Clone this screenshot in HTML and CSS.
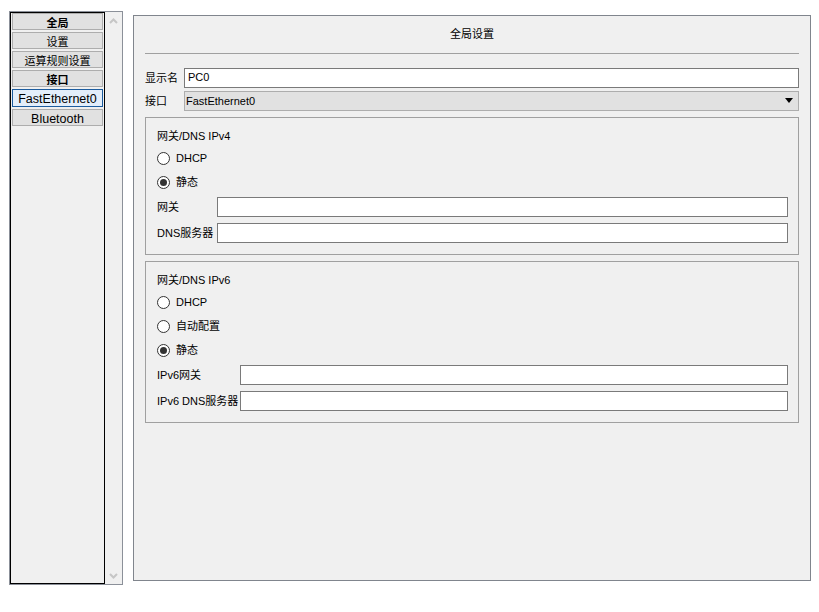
FILE: index.html
```html
<!DOCTYPE html>
<html lang="zh">
<head>
<meta charset="utf-8">
<title>全局设置</title>
<link rel="stylesheet" href="styles.css">
</head>
<body>
<div class="app">
  <div class="side">
    <div class="list">
      <div class="item cjk bold">全局</div>
      <div class="item cjk">设置</div>
      <div class="item cjk">运算规则设置</div>
      <div class="item cjk bold">接口</div>
      <div class="item selected">FastEthernet0</div>
      <div class="item">Bluetooth</div>
    </div>
    <div class="scroll">
      <svg class="chev" width="9" height="6" viewBox="0 0 9 6"><polyline points="1,5 4.5,1.5 8,5" fill="none" stroke="#c6c6c6" stroke-width="2"/></svg>
      <svg class="chev" width="9" height="6" viewBox="0 0 9 6"><polyline points="1,1 4.5,4.5 8,1" fill="none" stroke="#c6c6c6" stroke-width="2"/></svg>
    </div>
  </div>

  <div class="main">
    <div class="header">全局设置</div>
    <div class="sep"></div>

    <div class="row first">
      <div class="label w39">显示名</div>
      <div class="field">PC0</div>
    </div>
    <div class="row second">
      <div class="label w39">接口</div>
      <div class="select">
        <span>FastEthernet0</span>
        <svg width="8" height="5" viewBox="0 0 8 5"><polygon points="0,0 8,0 4,5" fill="#000"/></svg>
      </div>
    </div>

    <div class="group">
      <div class="gtitle">网关/DNS IPv4</div>
      <div class="radio-row first-radio"><span class="radio"></span><span>DHCP</span></div>
      <div class="radio-row"><span class="radio checked"></span><span class="rtext">静态</span></div>
      <div class="row grow-first">
        <div class="label w60">网关</div>
        <div class="field"></div>
      </div>
      <div class="row grow-next">
        <div class="label w60">DNS服务器</div>
        <div class="field"></div>
      </div>
    </div>

    <div class="group">
      <div class="gtitle">网关/DNS IPv6</div>
      <div class="radio-row first-radio"><span class="radio"></span><span>DHCP</span></div>
      <div class="radio-row"><span class="radio"></span><span class="rtext">自动配置</span></div>
      <div class="radio-row"><span class="radio checked"></span><span class="rtext">静态</span></div>
      <div class="row grow-first">
        <div class="label w83">IPv6网关</div>
        <div class="field"></div>
      </div>
      <div class="row grow-next">
        <div class="label w83">IPv6 DNS服务器</div>
        <div class="field"></div>
      </div>
    </div>
  </div>
</div>
</body>
</html>
```

FILE: styles.css
```css
* { box-sizing: border-box; }

body {
  margin: 0;
  background: #ffffff;
  font-family: "Liberation Sans", "Noto Sans CJK SC", sans-serif;
  font-size: 11px;
  color: #000;
}

.app {
  display: flex;
  align-items: flex-start;
  padding: 11px 0 0 9px;
}

/* left navigation */
.side {
  width: 114px;
  height: 574px;
  border: 1px solid #8b9099;
  background: #f0f0f0;
  display: flex;
}

.list {
  width: 95px;
  height: 572px;
  border: 1px solid #000;
  padding: 0 1px;
  display: flex;
  flex-direction: column;
  gap: 2px;
}

.item {
  height: 17px;
  border: 1px solid #adadad;
  background: #e1e1e1;
  text-align: center;
  font-size: 12.5px;
  line-height: 12px;
  padding-top: 3px;
  white-space: nowrap;
  overflow: visible;
}

.item.cjk { font-size: 11px; }
.item.bold { font-weight: bold; }

.item.selected {
  height: 18px;
  border-color: #1c5c9e;
  background: #e3eefa;
}

.scroll {
  width: 17px;
  display: flex;
  flex-direction: column;
  align-items: center;
  justify-content: space-between;
  padding: 6px 0 5px 0;
}

.chev { display: block; }

/* main panel */
.main {
  margin: 4px 0 0 10px;
  width: 678px;
  height: 566px;
  border: 1px solid #80858d;
  background: #f0f0f0;
  padding: 0 11px;
}

.header {
  height: 37px;
  display: flex;
  align-items: center;
  justify-content: center;
  font-size: 11px;
  padding-bottom: 4px;
}

.sep {
  height: 1px;
  background: #a0a0a0;
}

.row {
  display: flex;
  align-items: center;
  height: 20px;
}

.row.first { margin-top: 14px; }
.row.second { margin-top: 3px; }
.row.grow-first { margin-top: 3px; }
.row.grow-next { margin-top: 6px; }

.label {
  flex: none;
  white-space: nowrap;
  padding-bottom: 2px;
}
.w39 { width: 39px; }
.w60 { width: 60px; }
.w83 { width: 83px; }

.field {
  flex: 1;
  height: 20px;
  border: 1px solid #7a7a7a;
  background: #ffffff;
  padding-left: 3px;
  line-height: 17px;
}

.select {
  flex: 1;
  height: 20px;
  border: 1px solid #adadad;
  background: #e1e1e1;
  display: flex;
  align-items: center;
  justify-content: space-between;
  padding: 0 5px 1px 1px;
}

.select svg { display: block; }

/* group boxes */
.group {
  margin-top: 6px;
  border: 1px solid #a0a0a0;
  padding: 11px 10px 11px 11px;
}

.gtitle {
  height: 14px;
  line-height: 14px;
}

.radio-row {
  height: 24px;
  display: flex;
  align-items: center;
  gap: 6px;
}

.radio-row.first-radio { margin-top: 3px; }

.rtext { padding-bottom: 2px; }

.radio {
  width: 13px;
  height: 13px;
  border: 1px solid #333;
  border-radius: 50%;
  background: #fff;
  display: flex;
  align-items: center;
  justify-content: center;
}

.radio.checked::after {
  content: "";
  width: 7px;
  height: 7px;
  border-radius: 50%;
  background: #333;
}
```
